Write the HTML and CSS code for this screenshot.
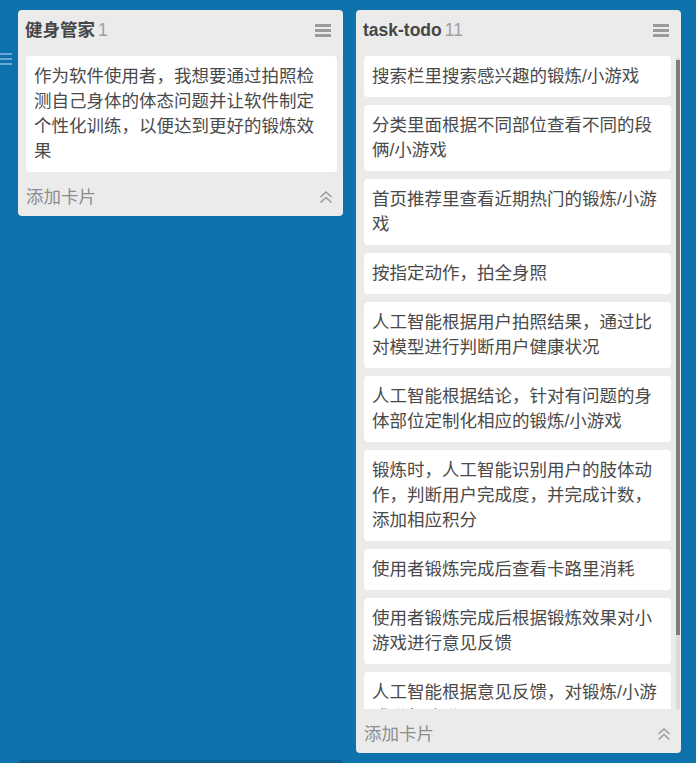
FILE: index.html
```html
<!DOCTYPE html>
<html lang="zh-CN">
<head>
<meta charset="utf-8">
<title>Board</title>
<link rel="stylesheet" href="styles.css">
</head>
<body>
<div class="side-toggle"><span></span><span></span><span></span></div>
<div class="board">
  <section class="column">
    <header class="col-head">
      <h2 class="col-title">健身管家<span class="count">1</span></h2>
      <div class="menu"><span></span><span></span><span></span></div>
    </header>
    <div class="cards">
      <div class="card">作为软件使用者，我想要通过拍照检测自己身体的体态问题并让软件制定个性化训练，以便达到更好的锻炼效果</div>
    </div>
    <footer class="col-foot">
      <span class="add">添加卡片</span>
      <svg class="collapse" width="14" height="14" viewBox="0 0 14 14"><path d="M1.5 7 L7 2 L12.5 7 M1.5 12.5 L7 7.5 L12.5 12.5" fill="none" stroke="#9a9a9a" stroke-width="1.6"/></svg>
    </footer>
  </section>
  <section class="column tall">
    <header class="col-head">
      <h2 class="col-title">task-todo<span class="count">11</span></h2>
      <div class="menu"><span></span><span></span><span></span></div>
    </header>
    <div class="cards scroll">
      <div class="card">搜索栏里搜索感兴趣的锻炼/小游戏</div>
      <div class="card">分类里面根据不同部位查看不同的段俩/小游戏</div>
      <div class="card">首页推荐里查看近期热门的锻炼/小游戏</div>
      <div class="card">按指定动作，拍全身照</div>
      <div class="card">人工智能根据用户拍照结果，通过比对模型进行判断用户健康状况</div>
      <div class="card">人工智能根据结论，针对有问题的身体部位定制化相应的锻炼/小游戏</div>
      <div class="card">锻炼时，人工智能识别用户的肢体动作，判断用户完成度，并完成计数，添加相应积分</div>
      <div class="card">使用者锻炼完成后查看卡路里消耗</div>
      <div class="card">使用者锻炼完成后根据锻炼效果对小游戏进行意见反馈</div>
      <div class="card">人工智能根据意见反馈，对锻炼/小游戏进行改进</div>
    </div>
    <div class="vscroll"><div class="thumb"></div></div>
    <footer class="col-foot">
      <span class="add">添加卡片</span>
      <svg class="collapse" width="14" height="14" viewBox="0 0 14 14"><path d="M1.5 7 L7 2 L12.5 7 M1.5 12.5 L7 7.5 L12.5 12.5" fill="none" stroke="#9a9a9a" stroke-width="1.6"/></svg>
    </footer>
  </section>
</div>
<div class="hscroll"></div>
</body>
</html>
```
FILE: styles.css
```css
* { box-sizing: border-box; }
html, body { margin: 0; height: 100%; }
body {
  background: #0e72ad;
  font-family: "Liberation Sans", "Noto Sans CJK SC", sans-serif;
  overflow: hidden;
  position: relative;
}
.side-toggle {
  position: absolute;
  left: 0;
  top: 53px;
  width: 12px;
  display: flex;
  flex-direction: column;
  gap: 3px;
}
.side-toggle span {
  display: block;
  height: 2px;
  background: #6aa9d6;
}
.board {
  height: 100%;
  padding: 10px 0 10px 18px;
  display: flex;
  align-items: flex-start;
  gap: 13px;
}
.column {
  position: relative;
  flex: 0 0 325px;
  max-height: 100%;
  background: #ebebeb;
  border-radius: 4px;
  display: flex;
  flex-direction: column;
  overflow: hidden;
}
.col-head {
  display: flex;
  align-items: center;
  justify-content: space-between;
  padding: 10px 12px 8px 7px;
  height: 38px;
}
.col-title {
  margin: 0;
  font-size: 17.5px;
  line-height: 20px;
  font-weight: bold;
  color: #464646;
}
.count {
  font-weight: normal;
  color: #a0a0a0;
  margin-left: 3px;
}
.menu {
  width: 16px;
  display: flex;
  flex-direction: column;
  gap: 2.3px;
  margin-top: 1px;
}
.menu span {
  display: block;
  height: 2.7px;
  background: #9a9a9a;
}
.cards {
  display: flex;
  flex-direction: column;
  gap: 8px;
  padding: 8px 6px 0 8px;
  min-height: 0;
}
.cards.scroll {
  flex: 1;
  overflow: hidden;
  padding-right: 10px;
}
.vscroll {
  position: absolute;
  right: 1px;
  top: 48px;
  bottom: 44px;
  width: 4px;
  background: #dadada;
}
.vscroll .thumb {
  margin-top: 2px;
  height: 575px;
  background: #7d7d7d;
}
.card {
  flex: 0 0 auto;
  background: #fff;
  border-radius: 4px;
  padding: 8px;
  font-size: 17.5px;
  line-height: 25px;
  color: #4a4a4a;
}
.col-foot {
  flex: 0 0 44px;
  display: flex;
  align-items: center;
  justify-content: space-between;
  padding: 2px 10px 0 8px;
}
.add {
  font-size: 17.5px;
  color: #8c8c8c;
}
.collapse { display: block; margin-top: 3px; }
.hscroll {
  position: absolute;
  left: 20px;
  bottom: 0;
  width: 322px;
  height: 3px;
  background: #0b5e92;
}
```
